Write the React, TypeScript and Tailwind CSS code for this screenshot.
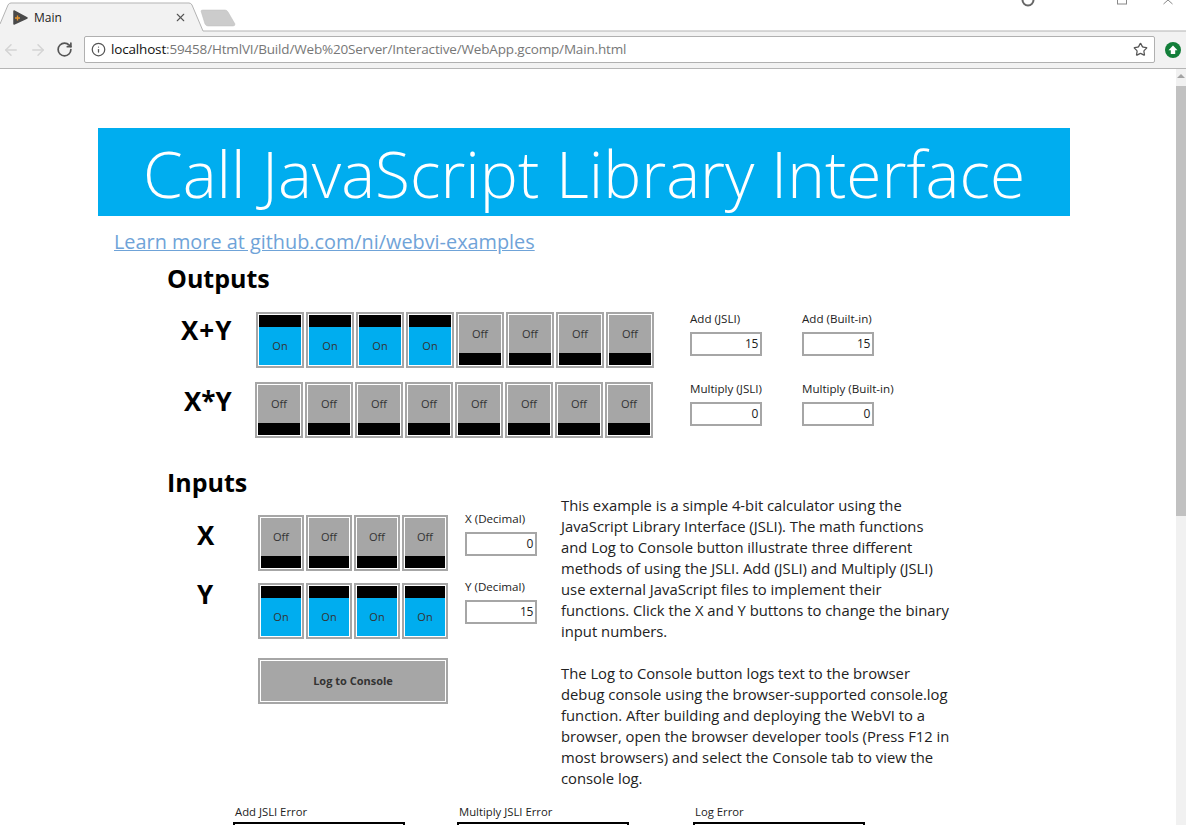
import React from 'react';
import { ArrowLeft, ArrowRight, RotateCw, Info, Star, X } from 'lucide-react';

const sans = '[font-family:"Open_Sans","Noto_Sans",sans-serif]';

// Binary switch: black strip at the top when on, at the bottom when off
const Switch = ({ on, width }: { on: boolean; width: string }) => (
  <div className={`${width} h-[56px] border-2 border-[#a6a6a6] shrink-0`}>
    <div className="h-full border border-white flex flex-col">
      {on && <div className="h-[12px] bg-black" />}
      <div className={`flex-1 flex items-center justify-center text-[11px] text-[#333] ${on ? 'bg-[#00adef]' : 'bg-[#a6a6a6]'}`}>
        {on ? 'On' : 'Off'}
      </div>
      {!on && <div className="h-[12px] bg-black" />}
    </div>
  </div>
);

const Numeric = ({ label, value, className }: { label: string; value: string; className?: string }) => (
  <div className={`w-[72px] shrink-0 ${className ?? ''}`}>
    <div className="h-[20px] text-[11.6px] leading-[14px] text-[#222] whitespace-nowrap">{label}</div>
    <div className="h-[24px] border-2 border-[#a6a6a6] flex items-center justify-end pr-[2px] text-[12px] text-[#222] tracking-[-0.3px]">
      {value}
    </div>
  </div>
);

const ErrorBox = ({ label, className }: { label: string; className?: string }) => (
  <div className={`w-[172px] shrink-0 ${className ?? ''}`}>
    <div className="h-[17px] text-[11.3px] leading-[14px] text-[#222] pl-[2px] whitespace-nowrap">{label}</div>
    <div className="h-[40px] border-2 border-black" />
  </div>
);

const paragraphOne = [
  'This example is a simple 4-bit calculator using the',
  'JavaScript Library Interface (JSLI). The math functions',
  'and Log to Console button illustrate three different',
  'methods of using the JSLI. Add (JSLI) and Multiply (JSLI)',
  'use external JavaScript files to implement their',
  'functions. Click the X and Y buttons to change the binary',
  'input numbers.',
];

const paragraphTwo = [
  'The Log to Console button logs text to the browser',
  'debug console using the browser-supported console.log',
  'function. After building and deploying the WebVI to a',
  'browser, open the browser developer tools (Press F12 in',
  'most browsers) and select the Console tab to view the',
  'console log.',
];

const App = () => {
  const addBits = [true, true, true, true, false, false, false, false];
  const mulBits = [false, false, false, false, false, false, false, false];

  return (
    <div className={`w-[1186px] h-[825px] overflow-hidden bg-white flex flex-col ${sans}`}>
      {/* Tab strip */}
      <div className="h-[32px] relative shrink-0">
        <svg className="absolute left-0 top-0" width="1186" height="33" viewBox="0 0 1186 33">
          <path d="M0 24 L8 5 Q9 3 11 3 L189 3 Q191 3 192 5 L203 31 L1186 31 L1186 33 L0 33 Z" fill="#f2f2f2" />
          <path d="M0 24 L8 5 Q9 3 11 3 L189 3 Q191 3 192 5 L203 31 L1186 31" fill="none" stroke="#b3b3b3" strokeWidth="1" />
          <path d="M201 11 Q201 10 203 10 L225 10 Q227 10 228 12 L235 24 Q235 26 233 26 L208 26 Q206 26 205 24 Z" fill="#cccccc" stroke="#bdbdbd" strokeWidth="0.5" />
          {/* app icon */}
          <path d="M14 11 L27 18 L14 24 Z" fill="#4a4a4a" stroke="#4a4a4a" strokeWidth="1.5" strokeLinejoin="round" />
          <path d="M15 18 H20 M17.5 15.5 V20.5" stroke="#e8962e" strokeWidth="1.3" />
          {/* window controls, cut off by the capture */}
          <circle cx="1028" cy="0" r="5.5" fill="none" stroke="#666" strokeWidth="2" />
          <rect x="1117.5" y="-5" width="9" height="9" fill="none" stroke="#888" />
          <path d="M1163.5 4 L1168 0 L1172.5 4" fill="none" stroke="#888" />
        </svg>
        <span className="absolute left-[34px] top-[10px] text-[12px] leading-[16px] text-[#222]">Main</span>
        <X size={13} strokeWidth={2} className="absolute left-[174px] top-[11px] text-[#555]" />
      </div>

      {/* Toolbar */}
      <div className="h-[37px] shrink-0 bg-[#f2f2f2] border-b border-[#b5b5b5] flex items-center">
        <div className="w-[84px] flex items-center pl-[2px] shrink-0 pb-[1px]">
          <ArrowLeft size={18} strokeWidth={2} className="text-[#d4d4d4]" />
          <ArrowRight size={18} strokeWidth={2} className="text-[#d4d4d4] ml-[9px]" />
          <RotateCw size={17} strokeWidth={2.4} className="text-[#555] ml-[9px]" />
        </div>
        <div className="w-[1071px] h-[27px] bg-white border border-[#b0b0b0] rounded-[2px] flex items-center pl-[6px] pr-[6px] shrink-0 mb-[1px]">
          <Info size={15} strokeWidth={2} className="text-[#555] shrink-0" />
          <span className="ml-[5px] text-[13.5px] tracking-[-0.17px] text-[#777] whitespace-nowrap">
            <span className="text-[#111]">localhost</span>:59458/HtmlVI/Build/Web%20Server/Interactive/WebApp.gcomp/Main.html
          </span>
          <Star size={15} strokeWidth={2} className="text-[#555] ml-auto" />
        </div>
        <svg className="ml-[10px] mb-[1px]" width="16" height="16" viewBox="0 0 16 16">
          <circle cx="8" cy="8" r="8" fill="#137f3a" />
          <path d="M8 3.5 L12.5 8.2 H10.2 V12 H5.8 V8.2 H3.5 Z" fill="#fff" />
        </svg>
      </div>

      {/* Page + scrollbar */}
      <div className="flex-1 flex min-h-0">
        <div className="flex-1 min-w-0 overflow-hidden pt-[59px] pl-[98px]">
          <div className="w-[972px] h-[88px] pt-[3px] bg-[#00adef] flex items-center justify-center text-white text-[64px] font-light whitespace-nowrap leading-none">
            Call JavaScript Library Interface
          </div>
          <a className="block ml-[16px] mt-[12px] h-[28px] text-[19.85px] leading-[28px] text-[#6fa3d8] underline whitespace-nowrap">
            Learn more at github.com/ni/webvi-examples
          </a>

          <div className="ml-[69px]">
            <div className="text-[25px] leading-[34px] font-bold text-black mt-[5px]">Outputs</div>

            {/* X+Y row */}
            <div className="flex mt-[17px]">
              <div className="w-[89px] h-[56px] shrink-0 pl-[14px] text-[26px] leading-[36px] font-bold text-black tracking-[1px]">X+Y</div>
              <div className="flex gap-[2px]">
                {addBits.map((bit, i) => (
                  <Switch key={i} on={bit} width="w-[48px]" />
                ))}
              </div>
              <Numeric label="Add (JSLI)" value="15" className="ml-[36px]" />
              <Numeric label="Add (Built-in)" value="15" className="ml-[40px]" />
            </div>

            {/* X*Y row */}
            <div className="flex mt-[14px]">
              <div className="w-[88px] h-[56px] shrink-0 pl-[17px] text-[26px] leading-[38px] font-bold text-black">X*Y</div>
              <div className="flex gap-[2px]">
                {mulBits.map((bit, i) => (
                  <Switch key={i} on={bit} width="w-[48px]" />
                ))}
              </div>
              <Numeric label="Multiply (JSLI)" value="0" className="ml-[37px]" />
              <Numeric label="Multiply (Built-in)" value="0" className="ml-[40px]" />
            </div>

            <div className="text-[25px] leading-[34px] font-bold text-black mt-[27px]">Inputs</div>

            <div className="flex mt-[16px]">
              <div className="w-[91px] shrink-0">
                {/* X / Y rows */}
                <div className="h-[68px] pl-[30px] text-[26px] leading-[40px] font-bold text-black">X</div>
                <div className="h-[60px] pl-[30px] text-[26px] leading-[22px] font-bold text-black">Y</div>
              </div>
              <div className="w-[207px] shrink-0">
                <div className="flex gap-[2px]">
                  {[0, 1, 2, 3].map((i) => (
                    <Switch key={i} on={false} width="w-[46px]" />
                  ))}
                </div>
                <div className="flex gap-[2px] mt-[12px]">
                  {[0, 1, 2, 3].map((i) => (
                    <Switch key={i} on={true} width="w-[46px]" />
                  ))}
                </div>
                <div className="w-[190px] h-[46px] border-2 border-[#a6a6a6] mt-[19px]">
                  <div className="h-full border border-white bg-[#a6a6a6] flex items-center justify-center text-[11px] font-bold text-[#333]">
                    Log to Console
                  </div>
                </div>
              </div>
              <div className="w-[96px] shrink-0 -mt-[3px]">
                <Numeric label="X (Decimal)" value="0" />
                <Numeric label="Y (Decimal)" value="15" className="mt-[24px]" />
              </div>
              <div className="text-[14.8px] leading-[21px] text-[#222] whitespace-nowrap -mt-[20px]">
                {paragraphOne.map((line) => (
                  <div key={line}>{line}</div>
                ))}
                <div className="h-[21px]" />
                {paragraphTwo.map((line) => (
                  <div key={line}>{line}</div>
                ))}
              </div>
            </div>
          </div>

          {/* Error clusters, cut off by the bottom of the window */}
          <div className="flex ml-[135px] mt-[16px]">
            <ErrorBox label="Add JSLI Error" />
            <ErrorBox label="Multiply JSLI Error" className="ml-[52px]" />
            <ErrorBox label="Log Error" className="ml-[64px]" />
          </div>
        </div>

        {/* Scrollbar */}
        <div className="w-[10px] shrink-0 bg-[#f1f1f1] flex flex-col items-center pt-[5px]">
          <div className="w-0 h-0 border-l-[4px] border-r-[4px] border-b-[4px] border-l-transparent border-r-transparent border-b-[#a3a3a3]" />
          <div className="w-full h-[430px] bg-[#c1c1c1] mt-[8px]" />
        </div>
      </div>
    </div>
  );
};

export default App;
